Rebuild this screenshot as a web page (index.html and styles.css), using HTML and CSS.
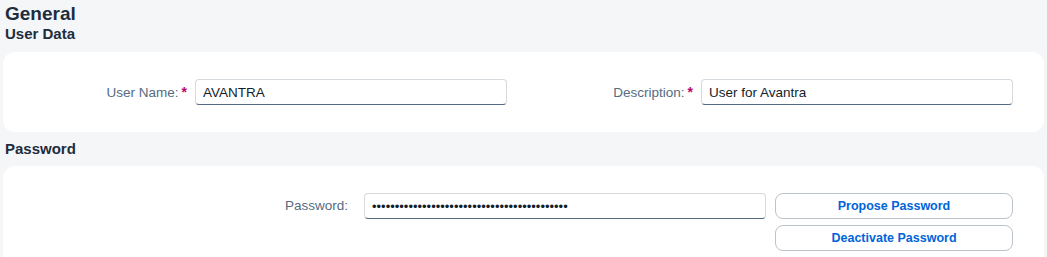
FILE: index.html
```html
<!DOCTYPE html>
<html lang="en">
<head>
<meta charset="utf-8">
<title>General</title>
<link rel="stylesheet" href="styles.css">
</head>
<body>
<div class="page">
  <h1 class="title">General</h1>
  <h2 class="section-title">User Data</h2>
  <div class="card card-user">
    <div class="form-cols">
      <div class="form-row">
        <label class="label" for="uname">User Name:<span class="req">*</span></label>
        <input class="input" id="uname" type="text" value="AVANTRA">
      </div>
      <div class="form-row">
        <label class="label" for="desc">Description:<span class="req">*</span></label>
        <input class="input" id="desc" type="text" value="User for Avantra">
      </div>
    </div>
  </div>
  <h2 class="section-title section-pw">Password</h2>
  <div class="card card-pw">
    <div class="pw-row">
      <label class="label label-opt" for="pw">Password:</label>
      <div class="pw-field">
        <input class="input pw-input" id="pw" type="password" value="abcdefghijabcdefghijabcdefghijabcdefghijabc">
        <div class="pw-actions">
          <button class="btn" type="button">Propose Password</button>
          <button class="btn" type="button">Deactivate Password</button>
        </div>
      </div>
    </div>
  </div>
</div>
</body>
</html>
```
FILE: styles.css
```css
html, body {
  margin: 0;
  padding: 0;
  background: #f5f6f7;
  font-family: "Liberation Sans", Arial, sans-serif;
  color: #1d2d3e;
}

.page {
  padding: 0 3px;
}

.title {
  margin: 3px 0 0 2px;
  font-size: 19px;
  line-height: 22px;
  font-weight: bold;
  color: #1d2d3e;
}

.section-title {
  margin: 0 0 9px 2px;
  font-size: 15px;
  line-height: 18px;
  font-weight: bold;
  color: #1d2d3e;
}

.section-pw {
  margin-top: 8px;
  margin-bottom: 8px;
}

.card {
  background: #ffffff;
  border-radius: 12px;
  padding: 27px 31px 27px 16px;
}

.card-pw {
  padding-bottom: 40px;
}

.form-cols {
  display: grid;
  grid-template-columns: 1fr 1fr;
  column-gap: 18px;
}

.form-row {
  display: grid;
  grid-template-columns: 1fr 312px;
  column-gap: 8px;
  align-items: center;
}

.label {
  text-align: right;
  font-size: 13.5px;
  color: #556b82;
  white-space: nowrap;
}

.req {
  color: #ba066c;
  font-weight: bold;
  margin-left: 3px;
  font-size: 14px;
}

.label-opt {
  padding-right: 8px;
}

.input {
  box-sizing: border-box;
  height: 26px;
  width: 100%;
  margin: 0;
  padding: 0 7px;
  border: 1px solid #d5dadf;
  border-bottom-color: #556b82;
  border-radius: 4px;
  background: #ffffff;
  font-family: "Liberation Sans", Arial, sans-serif;
  font-size: 13.5px;
  color: #131e29;
  outline: none;
}

.pw-row {
  display: grid;
  grid-template-columns: 337px 1fr;
  column-gap: 8px;
  align-items: start;
}

.pw-row .label {
  line-height: 26px;
}

.pw-field {
  display: flex;
  gap: 9px;
  align-items: flex-start;
}

.pw-input {
  flex: 1;
  font-size: 13px;
}

.pw-actions {
  display: flex;
  flex-direction: column;
  gap: 6px;
  width: 238px;
}

.btn {
  box-sizing: border-box;
  height: 26px;
  width: 100%;
  margin: 0;
  padding: 0 8px;
  border: 1px solid #bcc3ca;
  border-radius: 8px;
  background: #ffffff;
  color: #0064d9;
  font-family: "Liberation Sans", Arial, sans-serif;
  font-size: 12.5px;
  font-weight: bold;
  cursor: pointer;
}
```
